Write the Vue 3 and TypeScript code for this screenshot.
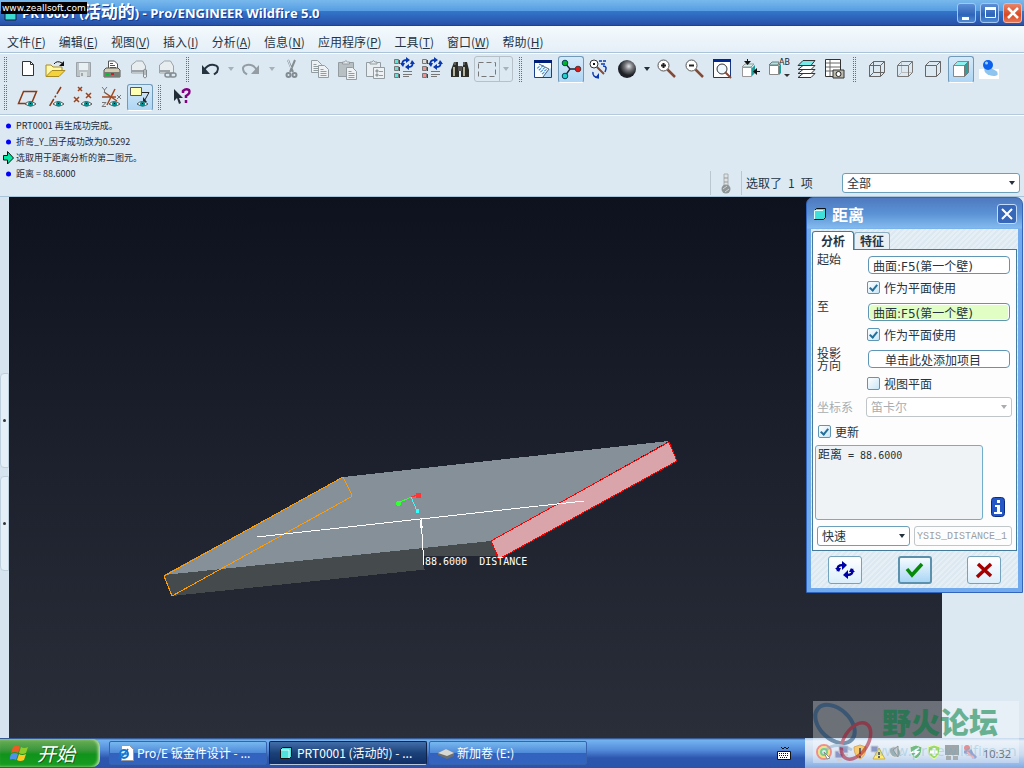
<script setup lang="ts">
import { ref } from 'vue'

interface Tool {
  id: string
  label: string
  kind?: 'icon' | 'grip' | 'arrow' | 'box'
  on?: boolean
}

const menus = [
  ['文件', 'F'], ['编辑', 'E'], ['视图', 'V'], ['插入', 'I'], ['分析', 'A'],
  ['信息', 'N'], ['应用程序', 'P'], ['工具', 'T'], ['窗口', 'W'], ['帮助', 'H'],
]

const eye = '<path d="M9 19q5-5 11 0q-5 4-11 0z" fill="#fff" stroke="#555"/><circle cx="14.500" cy="19" r="2.500" fill="#008c8c"/><path d="M14 18h1v1h-1z" fill="#000"/>'
const smallBoxes = (c: string, first: string) =>
  `<g stroke="#777"><path d="M2.500 2.500h4v4h-4z" fill="${first}"/><path d="M2.500 9.500h4v4h-4zM2.500 16.500h4v4h-4z" fill="${c}"/></g><path d="M7.500 3v4M7.500 10v4M7.500 17v4" stroke="#444"/><path d="M11 14.500h9M11 17.500h9M11 19.500h6" stroke="#777"/><path d="M10.500 8q-1-5 4-5M20.500 5q1 5-4 5" stroke="#0838b0" stroke-width="2" fill="none"/><path d="M14 0l4 3-4 3zM17 7l-4 3 4 3z" fill="#0838b0"/><path d="M8 6h5l-2 4zM18 7h5l-3-4z" fill="#0838b0"/>`
const sheet = (x: number, y: number) =>
  `<path d="M${x} ${y}h6l4 4v8h-10z" fill="#eef2f4" stroke="#939ca1"/><path d="M${x + 2} ${y + 4}h3M${x + 2} ${y + 6}h6M${x + 2} ${y + 8}h6M${x + 2} ${y + 10}h6" stroke="#939ca1"/>`
const lens = '<circle cx="8.500" cy="8.500" r="5.500" fill="#fff" stroke="#555"/><path d="M12.500 12.500l7.500 7.500" stroke="#854a35" stroke-width="2.500"/>'

const art: Record<string, string> = {
  new: '<path d="M6.500 4.500h8l3 3v11h-11z" fill="#fff" stroke="#333"/><path d="M14.500 4.500v3h3" fill="none" stroke="#333"/>',
  open: '<path d="M2 19v-11h5l2 2h9v3" fill="#fff8a8" stroke="#a88b20"/><path d="M2 19.500l6-6h13l-6 6z" fill="#f4d23a" stroke="#a88b20"/><path d="M10 7q3-4 8-1" fill="none" stroke="#111"/><path d="M20 4v5h-5z" fill="#111"/>',
  save: '<path d="M4.500 5.500h14v14h-14z" fill="#bcc3c7" stroke="#9ba3a8"/><path d="M7 6h9v7h-9z" fill="#e9f0f4"/><path d="M8 15h7v5h-7z" fill="#dbe2e6"/><path d="M9 16h2v3h-2z" fill="#a0a8ac"/>',
  print: '<path d="M8.500 12v-8h6l3 3v6" fill="#fff" stroke="#555"/><path d="M10 6.500h3M10 8.500h5M10 10.500h6" stroke="#555"/><path d="M4 13l2-2h12l2 2v7H4z" fill="#d4cfb4" stroke="#555"/><path d="M4 15h16v5H4z" fill="#777d74"/><path d="M6 16h3v2H6z" fill="#00c030"/><path d="M11 16h3v2h-3z" fill="#d71920"/>',
  mail: '<path d="M3.500 8l5-4h6l3 5v7h-14z" fill="#e8edef" stroke="#9ba3a8"/><path d="M4 14h12" stroke="#9ba3a8" stroke-width="2"/><path d="M15.500 20v-7q1.500-2 3 0v7q-1.500 2-3 0zM17 13v5" fill="#e8edef" stroke="#838c91"/>',
  link: '<path d="M3.500 8l5-4h6l3 5v7h-14z" fill="#e8edef" stroke="#9ba3a8"/><path d="M4 14h10" stroke="#9ba3a8" stroke-width="2"/><g fill="none" stroke="#838c91" stroke-width="1.500"><rect x="9" y="16" width="6" height="4" rx="2"/><rect x="14" y="16" width="6" height="4" rx="2"/></g>',
  undo: '<path d="M6 13q4-6 10-5q6 1 3 7l-3 2.500" fill="none" stroke="#263442" stroke-width="2"/><path d="M4 8v9h8z" fill="#263442"/>',
  redo: '<path d="M18 13q-4-6-10-5q-6 1-3 7l3 2.500" fill="none" stroke="#939da3" stroke-width="2"/><path d="M20 8v9h-8z" fill="#939da3"/>',
  cut: '<path d="M8 3l5 12M15 3l-5 12" stroke="#838c91" stroke-width="2"/><path d="M8 3l3 8" stroke="#dce9f3"/><g fill="none" stroke="#838c91" stroke-width="2"><circle cx="8.500" cy="18" r="2"/><circle cx="14.500" cy="18" r="2"/></g>',
  copy: sheet(3.5, 3.5) + sheet(10.5, 8.5),
  paste: '<path d="M2.500 5.500h15v14h-15z" fill="#b9c0c4" stroke="#939ca1"/><path d="M6.500 7v-2h2q1-3 3 0h2v2z" fill="#e4eaed" stroke="#939ca1"/>' + sheet(10.5, 10.5),
  special: '<path d="M2.500 5.500h14v14h-14z" fill="#e8eef1" stroke="#939ca1"/><path d="M6 7v-2h2q1-3 3 0h2v2z" fill="#e4eaed" stroke="#939ca1"/><path d="M9.500 10.500h11v11h-11z" fill="#eef2f4" stroke="#939ca1"/><path d="M12 13h2v2h-2zM12 17h2v2h-2zM15 14.500h4M15 18.500h4" fill="#939ca1" stroke="#939ca1"/>',
  regen: smallBoxes('#5fe3db', '#5fe3db'),
  regen2: smallBoxes('#f58f8f', '#ddd'),
  find: '<path d="M6 5h4v4l1 2v9H3v-7zM15 5h4l2 8v7h-8v-9l2-2z" fill="#2d2d28"/><path d="M10 9h4v5h-4z" fill="#555"/><path d="M6 10v9M16 10v9" stroke="#b8b6a0" stroke-width="2"/><path d="M7 5v3M16 5v3" stroke="#888"/>',
  repaint: '<path d="M3.500 3.500h17v17h-17z" fill="#f9fdff" stroke="#1a3d8c"/><path d="M3 3h18v3H3z" fill="#001e78"/><path d="M12 20q2-6 8-9v9z" fill="#b8dcf8"/><path d="M7 10l6 7M11 9l4 5" stroke="#2f86d8" stroke-dasharray="1 1.500" stroke-width="3"/><path d="M8 7q6 3 10 5l-6 8" stroke="#526477" fill="none"/>',
  spin: '<path d="M6 6l5 6h9M11 12l-5 7" stroke="#223" stroke-width="1.300" fill="none"/><circle cx="6" cy="6" r="2.800" fill="#00b52b" stroke="#045"/><circle cx="19" cy="12" r="2.800" fill="#e21818" stroke="#533"/><circle cx="6" cy="19" r="2.800" fill="#21cfcf" stroke="#045"/>',
  orient: '<circle cx="7" cy="7" r="4" fill="#fff" stroke="#333"/><path d="M7 6v2" stroke="#111" stroke-width="2"/><path d="M10 10l7 7" stroke="#854a35" stroke-width="2"/><g fill="none" stroke="#0838b0" stroke-width="1.500"><path d="M12 4h3M16 4h3M14 7h4M16 9q5 0 2 6M12 21q-7-1-6-6"/></g><path d="M8 21l4-5v5z" fill="#0838b0"/>',
  shade: '<defs><radialGradient id="ball" cx=".6" cy=".35"><stop offset="0" stop-color="#dfe3e6"/><stop offset=".45" stop-color="#77797e"/><stop offset="1" stop-color="#1d2025"/></radialGradient></defs><circle cx="12" cy="12" r="9" fill="url(#ball)"/>',
  zin: lens + '<path d="M6 8.500h5M8.500 6v5" stroke="#222" stroke-width="2"/>',
  zout: lens + '<path d="M6 8.500h5" stroke="#222" stroke-width="2"/>',
  refit: '<path d="M2.500 3.500h17v17h-17z" fill="#fff" stroke="#173884"/><path d="M2 2h18v3H2z" fill="#002a92"/><circle cx="11" cy="12" r="5" fill="#eef8ff" stroke="#333"/><path d="M14 15l6 6" stroke="#854a35" stroke-width="2"/>',
  reorient: '<path d="M3.500 10.500h9v9h-9z" fill="#fff" stroke="#999"/><path d="M3 10l3-3h9l-3 3z" fill="#c9f6f4" stroke="#999"/><path d="M13 11l3-3v8l-3 3z" fill="#1e9d98"/><path d="M8.500 2v4M21 14.500h-5" stroke="#111"/><path d="M5 4h7l-3.500 4zM18 11v7l-4-3.500z" fill="#111"/>',
  saved: '<path d="M2.500 8.500h9v9h-9z" fill="#fff" stroke="#888"/><path d="M2 8l3-3h7l-1 3z" fill="#9feae8" stroke="#777"/><path d="M12 9l2-2v9l-2 2z" fill="#1e9d98"/><text x="12" y="8" font-size="8" font-family="DejaVu Sans" fill="#222">AB</text><path d="M17 17h6l-3 3z" fill="#333"/>',
  layers: '<g stroke="#333" fill="#fff"><path d="M3 20.500l5-4h12l-4 4z"/><path d="M3 16.500l5-4h12l-4 4z"/><path d="M3 12.500l5-4h12l-4 4z"/><path d="M3 8.500l5-5h12l-4 5z" fill="#79e9e8"/></g>',
  viewmgr: '<path d="M2.500 2.500h15v17h-15z" fill="#fff" stroke="#333"/><path d="M3 6h14M3 10h14M3 14h14M7 3v16" stroke="#666"/><path d="M10 13h11v8H10z" fill="#bcb9ad" stroke="#333"/><circle cx="15.500" cy="17" r="2.500" fill="#fff" stroke="#222"/>',
  wire: '<path d="M4.500 8.500h11v11h-11zM8.500 4.500h11v11h-11zM4.500 8.500l4-4M15.500 8.500l4-4M15.500 19.500l4-4M4.500 19.500l4-4" fill="none" stroke="#666"/>',
  hidden: '<path d="M8.500 4.500v11h11M4.500 19.500l4-4" fill="none" stroke="#bbb"/><path d="M4.500 8.500h11v11h-11zl4-4h11v11l-4 4M15.500 8.500l4-4" fill="none" stroke="#777"/>',
  nohidden: '<path d="M4.500 8.500h11v11h-11zl4-4h11v11l-4 4M15.500 8.500l4-4" fill="none" stroke="#666"/>',
  shaded: '<path d="M4.500 8.500h11v11h-11z" fill="#fff" stroke="#888"/><path d="M4.500 8.500l4-4h11l-4 4z" fill="#8cf0ef" stroke="#888"/><path d="M15.500 8.500l4-4v11l-4 4z" fill="#329d9b" stroke="#777"/>',
  realism: '<path d="M2 12h20v10H2z" fill="#fff"/><ellipse cx="14" cy="15" rx="7" ry="3.500" fill="#8ec4ee" transform="rotate(20 14 15)"/><circle cx="11" cy="8" r="5" fill="#0b61ed"/><circle cx="9.500" cy="6" r="1.500" fill="#9dd0ff"/>',
  plane: '<path d="M2.500 18.500l5-12h13l-5 12z" fill="none" stroke="#8c3a12" stroke-width="1.500"/>' + eye,
  axis: '<path d="M17 2L5 22" stroke="#8c3a12" stroke-width="1.500" stroke-dasharray="8 2 2 2"/>' + eye,
  points: '<path d="M6 2l4 4M10 2L6 6M14 8l5 5M19 8l-5 5M2 12l5 5M7 12l-5 5" stroke="#9b431c" stroke-width="1.500"/>' + eye,
  csys: '<path d="M4 7l13 9M15 4L7 20M2 12h14" stroke="#a04a22" stroke-width="1.500"/><path d="M2 2l2.500 3L7 2M4.500 5v3M17 10l4 4M21 10l-4 4M2 17.500h4l-4 4h4" stroke="#777" fill="none"/>' + eye,
  note: '<path d="M2.500 2.500h11v8h-11z" fill="#ffffb4" stroke="#555"/><path d="M14 7.500h7l-5 9" stroke="#222" fill="none"/><path d="M15 12v5h4z" fill="#222"/>' + eye,
  help: '<path d="M4 4v12l3-3 2 6 2-1-2-5h4z" fill="#222d38"/><path d="M13 8V6q3-3 6-1q2 3-3 6v2M16 15v3" stroke="#800080" stroke-width="2.500" fill="none"/>',
  box: '<path d="M3.500 5.500h17v14h-17z" fill="none" stroke="#777" stroke-dasharray="5 3"/>',
}

const mk = (id: string, label: string, on = false): Tool => ({ id, label, on, kind: 'icon' })
const grip = (id: string): Tool => ({ id, label: '', kind: 'grip' })
const arrow = (id: string, label: string): Tool => ({ id, label, kind: 'arrow' })

const rowOne: Tool[] = [
  grip('g1'), mk('new', '新建'), mk('open', '打开'), mk('save', '保存'), mk('print', '打印'), mk('mail', '发送邮件'), mk('link', '发送链接'),
  grip('g2'), mk('undo', '撤消'), arrow('dim-1', '撤消列表'), mk('redo', '重做'), arrow('dim-2', '重做列表'),
  mk('cut', '剪切'), mk('copy', '复制'), mk('paste', '粘贴'), mk('special', '选择性粘贴'), mk('regen', '再生'), mk('regen2', '再生管理器'), mk('find', '查找'),
  { id: 'box', label: '选取框', kind: 'box' },
  grip('g3'), mk('repaint', '重画'), mk('spin', '旋转中心', true), mk('orient', '定向模式'), mk('shade', '外观库'), arrow('dark-1', '外观列表'),
  mk('zin', '放大'), mk('zout', '缩小'), mk('refit', '重新调整'), mk('reorient', '重定向'), mk('saved', '已命名视图'), mk('layers', '层'), mk('viewmgr', '视图管理器'),
  grip('g4'), mk('wire', '线框'), mk('hidden', '隐藏线'), mk('nohidden', '消隐'), mk('shaded', '着色', true), mk('realism', '增强的真实感'),
]
const rowTwo: Tool[] = [
  grip('g5'), mk('plane', '平面显示'), mk('axis', '轴显示'), mk('points', '点显示'), mk('csys', '坐标系显示'), mk('note', '注释显示', true),
  grip('g6'), mk('help', '上下文帮助'),
]
const rows = [rowOne, rowTwo]

const messages = [
  { text: 'PRT0001 再生成功完成。', prompt: false },
  { text: '折弯_Y_因子成功改为0.5292', prompt: false },
  { text: '选取用于距离分析的第二图元。', prompt: true },
  { text: '距离 = 88.6000', prompt: false },
]

const from = ref('曲面:F5(第一个壁)')
const to = ref('曲面:F5(第一个壁)')
const direction = ref('单击此处添加项目')
const fromPlane = ref(true)
const toPlane = ref(true)
const viewPlane = ref(false)
const update = ref(true)
const featureName = ref('YSIS_DISTANCE_1')
</script>

<template>
  <div class="desktop">
    <header class="titlebar">
      <svg class="app-icon" width="16" height="16" viewBox="0 0 16 16"><path d="M2 4h11v11H2z" fill="#3fd9d0" stroke="#123" /></svg>
      <h1>PRT0001 (<span>活动的</span>) - Pro/ENGINEER Wildfire 5.0</h1>
      <div class="caption">
        <button aria-label="最小化"><svg width="18" height="18" viewBox="0 0 18 18"><path d="M4 13h7v3H4z" fill="#fff" /></svg></button>
        <button aria-label="最大化"><svg width="18" height="18" viewBox="0 0 18 18"><path d="M4.500 5.500h10v8h-10z" fill="none" stroke="#fff" /><path d="M4 4.500h11" stroke="#fff" stroke-width="3" /></svg></button>
        <button class="close" aria-label="关闭"><svg width="18" height="18" viewBox="0 0 18 18"><path d="M4 4l10 10M14 4L4 14" stroke="#fff" stroke-width="2.500" /></svg></button>
      </div>
      <span class="stamp">www.zeallsoft.com</span>
    </header>

    <nav class="menubar">
      <button v-for="m in menus" :key="m[1]">{{ m[0] }}(<u>{{ m[1] }}</u>)</button>
    </nav>

    <div class="toolbars">
      <div v-for="(row, i) in rows" :key="i" class="toolrow">
        <template v-for="t in row" :key="t.id">
          <span v-if="t.kind === 'grip'" class="grip"></span>
          <button v-else-if="t.kind === 'arrow'" class="drop" :class="{ dim: t.id.startsWith('dim') }" :aria-label="t.label"><i></i></button>
          <button v-else-if="t.kind === 'box'" class="boxtool" :aria-label="t.label">
            <svg width="24" height="24" viewBox="0 0 24 24" v-html="art.box"></svg><b><i></i></b>
          </button>
          <button v-else class="tool" :class="{ on: t.on }" :aria-label="t.label">
            <svg width="24" height="24" viewBox="0 0 24 24" v-html="art[t.id]"></svg>
          </button>
        </template>
      </div>
    </div>

    <section class="messages">
      <ul>
        <li v-for="m in messages" :key="m.text">
          <svg v-if="m.prompt" width="16" height="14" viewBox="0 0 16 14"><path d="M3.500 4.500h4v-4l6 6.500-6 6v-4h-4z" fill="#00e6a0" stroke="#111" /></svg>
          <svg v-else width="16" height="14" viewBox="0 0 16 14"><circle cx="8.500" cy="7" r="2.500" fill="#00f" /></svg>
          {{ m.text }}
        </li>
      </ul>
      <div class="status">
        <svg class="thermo" width="30" height="24" viewBox="0 0 30 24"><path d="M13 3h4v12h-4z" fill="#dfe3e4" stroke="#a8aeb0" /><path d="M13 7h4M13 11h4" stroke="#999" /><circle cx="15" cy="18" r="4.500" fill="#8e9597" /><path d="M12 18l4-3M14 21l4-3" stroke="#cfd4d5" /></svg>
        <span class="picked">选取了&ensp;1&ensp;项</span>
        <span class="pick filter">
          <select aria-label="过滤器"><option>全部</option></select><i></i>
        </span>
      </div>
    </section>

    <main class="work">
      <div class="gutter"><span></span><span></span></div>
      <div class="canvas">
        <svg class="model" width="933" height="541" viewBox="9 197 933 541" shape-rendering="crispEdges">
          <path d="M164 575L343 477L669 441L491 541Z" fill="#869098" />
          <path d="M164 575L491 541L499 556H424V569H430L172 596Z" fill="#454b4d" />
          <path d="M491 541L669 442L677 461L499 559Z" fill="#d9a4aa" stroke="#f00" />
          <path d="M164 576L343 477L351 493V497L172 596Z" fill="none" stroke="#ff9a00" />
          <path d="M257 537L584 501M421 518L424 565" stroke="#fff" fill="none" />
          <path d="M420 518L423 528H420Z" fill="#fff" />
          <path d="M411 497L418 495" stroke="#f33" />
          <path d="M411 497L398 503" stroke="#3f3" />
          <path d="M411 497L417 511" stroke="#3ff" />
          <circle cx="418.500" cy="495.500" r="3" fill="#ff3434" />
          <circle cx="398.500" cy="503.500" r="2.500" fill="#34ff34" />
          <circle cx="417.500" cy="511" r="2" fill="#3ff" />
          <text x="425" y="565">88.6000&nbsp;&nbsp;DISTANCE</text>
        </svg>
      </div>
      <div class="side"></div>

      <section class="dialog" aria-label="距离">
        <header>
          <svg width="14" height="14" viewBox="0 0 14 14"><path d="M1.500 3.500l2-2h9v9l-2 2h-9z" fill="#3fe0da" stroke="#111" /><path d="M1.500 12V3.500H10" fill="none" stroke="#dff" /></svg>
          <h2>距离</h2>
          <button aria-label="关闭"><svg width="18" height="18" viewBox="0 0 18 18"><path d="M4 4l10 10M14 4L4 14" stroke="#fff" stroke-width="2" /></svg></button>
        </header>
        <div class="body">
          <div class="tabs"><button class="active">分析</button><button>特征</button></div>
          <div class="panel">
            <div class="field"><label for="from">起始</label><input id="from" v-model="from" type="text" /></div>
            <label class="check indent"><input v-model="fromPlane" type="checkbox" />作为平面使用</label>
            <div class="field"><label for="to">至</label><input id="to" v-model="to" class="active" type="text" /></div>
            <label class="check indent"><input v-model="toPlane" type="checkbox" />作为平面使用</label>
            <div class="field"><label for="dir">投影<br />方向</label><input id="dir" v-model="direction" class="hint" type="text" /></div>
            <label class="check indent last"><input v-model="viewPlane" type="checkbox" />视图平面</label>
            <div class="field off">
              <label for="csys">坐标系</label>
              <span class="pick"><select id="csys" disabled><option>笛卡尔</option></select><i></i></span>
            </div>
            <label class="check"><input v-model="update" type="checkbox" />更新</label>
            <div class="result">
              <output>距离<span> = 88.6000</span></output>
              <button aria-label="信息"><svg width="14" height="20" viewBox="0 0 14 20"><rect x=".5" y=".5" width="13" height="19" rx="3" fill="#2458c6" stroke="#0c2b86" /><path d="M6 3h3v3H6zM4 8h5v7h2v2H3v-2h3v-5H4z" fill="#fff" /></svg></button>
            </div>
            <div class="save">
              <span class="pick"><select aria-label="分析类型"><option>快速</option></select><i></i></span>
              <input v-model="featureName" type="text" disabled aria-label="名称" />
            </div>
          </div>
          <footer>
            <button aria-label="重复"><svg width="22" height="20" viewBox="0 0 22 20"><path d="M4 11q-2-6 5-6M18 9q2 6-5 6" fill="none" stroke="#000098" stroke-width="2.500" /><path d="M8 1l5 4-5 5zM14 10l-5 5 5 4z" fill="#0000a8" /><path d="M1 8h6l-2 4zM21 12h-6l2-4z" fill="#0000a8" /></svg></button>
            <button class="default" aria-label="确定"><svg width="22" height="20" viewBox="0 0 22 20"><path d="M3 9l5 6L18 4" fill="none" stroke="#078a07" stroke-width="3.500" /></svg></button>
            <button aria-label="取消"><svg width="22" height="20" viewBox="0 0 22 20"><path d="M5 4l13 12M18 4L4 17" fill="none" stroke="#a40000" stroke-width="3.500" /></svg></button>
          </footer>
        </div>
      </section>
    </main>

    <footer class="taskbar">
      <button class="start">
        <svg width="20" height="20" viewBox="0 0 20 20"><path d="M3 4q4-3 7 0l-2 6q-3-2-7 0z" fill="#ee5a24" /><path d="M11 4q3 2 7 0l-2 6q-4 2-7 0z" fill="#8ecb2c" /><path d="M1 11q4-2 7 0l-2 6q-3-2-7 0z" fill="#4d93e8" /><path d="M9 11q3 2 7 0l-2 6q-4 2-7 0z" fill="#ffc820" /></svg>
        开始
      </button>
      <div class="tasks">
        <button>
          <svg width="16" height="16" viewBox="0 0 16 16"><path d="M3.500 .5h8l4 4v11h-12z" fill="#fff" stroke="#999" /><circle cx="6" cy="9" r="4" fill="#d4efff" stroke="#1676cf" stroke-width="2" /><path d="M3 9h7M0 13q5-1 10-9" stroke="#1676cf" stroke-width="1.500" fill="none" /></svg>
          Pro/E 钣金件设计 - ...
        </button>
        <button class="current">
          <svg width="16" height="16" viewBox="0 0 16 16"><path d="M2.500 4.500l2-2h9v9l-2 2h-9z" fill="#4fe2dc" stroke="#111" /><path d="M3 5h8v8" stroke="#d5ffff" fill="none" /></svg>
          PRT0001 (活动的) - ...
        </button>
        <button>
          <svg width="16" height="16" viewBox="0 0 16 16"><path d="M0 8l8-4 8 4v3l-7 3-9-4z" fill="#6b6f70" /><path d="M0 8l8-4 8 4-7 3z" fill="#d6d8d4" /></svg>
          新加卷 (E:)
        </button>
      </div>
      <svg class="keyboard" width="14" height="14" viewBox="0 0 14 14"><path d="M4 1l2 2 2-2 2 2 2-2" fill="none" stroke="#111" /><path d="M.5 5.500h13v8H.5z" fill="#fff" stroke="#111" /><path d="M2 7.500h10M2 9.500h10M3 11.500h8" stroke="#111" stroke-dasharray="1 1" /></svg>
      <div class="tray">
        <svg width="16" height="18" viewBox="0 0 16 18"><g fill="none" stroke-width="2"><circle cx="8" cy="8" r="7" stroke="#e85b52" /><circle cx="8" cy="8" r="5" stroke="#f1d33b" /><circle cx="8" cy="8" r="3" stroke="#37b957" /></g><path d="M8 8l6 6-3 1z" fill="#fff" stroke="#555" /></svg>
        <svg width="16" height="18" viewBox="0 0 16 18"><path d="M5 2h9v7H5zM1 7h8v7H1z" fill="#5767ae" stroke="#b7bbca" /><path d="M9 11h5M3 16h5" stroke="#bbb" stroke-width="2" /></svg>
        <svg width="16" height="18" viewBox="0 0 16 18"><path d="M8 1l6 2q0 9-6 12q-6-3-6-12z" fill="#f4b22a" stroke="#c7851a" /><path d="M8 4v6M8 12v2" stroke="#222" stroke-width="2" /></svg>
        <svg width="16" height="18" viewBox="0 0 16 18"><path d="M1 2h7v6H1z" fill="#5767ae" stroke="#b7bbca" /><path d="M9 4l6 11H3z" fill="#ffe52a" stroke="#b48a11" /><path d="M9 8v3M9 12v2" stroke="#222" stroke-width="2" /></svg>
        <svg width="16" height="18" viewBox="0 0 16 18"><ellipse cx="7" cy="8" rx="6" ry="5" fill="#7f8c91" stroke="#d9dddd" transform="rotate(35 7 8)" /><path d="M5 6l5-4v11z" fill="#b9bec0" stroke="#59656a" /><path d="M12 12l3-2" stroke="#8bb6d5" /></svg>
        <svg class="gap" width="16" height="18" viewBox="0 0 16 18"><path d="M8 1l6 2q0 9-6 12q-6-3-6-12z" fill="#329b43" stroke="#d8efda" /><path d="M11 4L5 8h5l-4 4" stroke="#fff" stroke-width="2" fill="none" /></svg>
        <svg width="16" height="18" viewBox="0 0 16 18"><path d="M8 1l6 2q0 9-6 12q-6-3-6-12z" fill="#73c82b" stroke="#e5ff79" /><path d="M8 4v8M4 8h8" stroke="#fff" stroke-width="3" /></svg>
        <svg width="16" height="18" viewBox="0 0 16 18"><path d="M1 1h14v10H1z" fill="#737b80" /><path d="M2 12h5v4H2zM9 12h5v4H9z" fill="#7f878b" /></svg>
        <svg width="16" height="18" viewBox="0 0 16 18"><circle cx="5" cy="4" r="3" fill="#d85a62" /><path d="M2 8h6l6 6M8 6l4 8" stroke="#687cbd" stroke-width="3" /><path d="M5 8l7 6" stroke="#ef8f95" stroke-width="2" /></svg>
        <time>10:32</time>
      </div>
    </footer>

    <div class="watermark">
      <svg width="60" height="62" viewBox="0 0 60 62" fill="none"><ellipse cx="22" cy="23" rx="23" ry="15" stroke="#2c577f" stroke-width="4" transform="rotate(43 22 23)" /><ellipse cx="43" cy="40" rx="20" ry="12" stroke="#b02a40" stroke-width="3.500" transform="rotate(-58 43 40)" /><path d="M13 49q10-9 26 0" stroke="#9bb7d0" stroke-width="3" /></svg>
      <strong>野火论坛</strong>
      <em>www.proewildfire.cn</em>
    </div>
  </div>
</template>

<style>
html,
body {
  margin: 0;
}
</style>

<style scoped>
.desktop {
  position: relative;
  display: flex;
  flex-direction: column;
  height: 100vh;
  overflow: hidden;
  background: #dce9f3;
  color: #263442;
  font: 12px/16px "Noto Sans CJK SC", sans-serif;
}
button, input, select { margin: 0; padding: 0; border: 0; color: inherit; font: inherit; background: none; box-sizing: border-box; }
button { display: flex; align-items: center; justify-content: center; flex: none; }
svg { flex: none; display: block; }
h1, h2, ul { margin: 0; padding: 0; }

.titlebar {
  display: flex;
  align-items: center;
  flex: none;
  height: 26px;
  padding: 0 2px 0 3px;
  box-sizing: border-box;
  background: linear-gradient(#78b9ec, #569de2 42%, #3276cb 43%, #2852aa 94%, #183c8b);
}
.titlebar h1 { flex: 1; padding-left: 3px; color: #fff; font: bold 13px/24px "Open Sans", "Noto Sans CJK SC", sans-serif; text-shadow: 1px 1px #173b91; white-space: nowrap; }
.titlebar h1 span { font-size: 17px; line-height: 20px; }
.caption { display: flex; gap: 4px; }
.caption button { width: 19px; height: 20px; border: 1px solid #a3c7f1; border-radius: 3px; background: linear-gradient(#5d8fd6, #2f65b9 60%, #4c8ad4); }
.caption .close { border-color: #f2b5a5; background: linear-gradient(#e98568, #d64a24 60%, #ea7451); }
.stamp { position: absolute; top: 2px; left: 1px; padding: 0 1px; background: #000; color: #fff; font: 9px/12px "DejaVu Sans", sans-serif; white-space: nowrap; }

.menubar { display: flex; flex: none; gap: 13px; height: 26px; padding-left: 7px; background: linear-gradient(#f4fafd, #e5eff7); border-bottom: 1px solid #a9c3d8; }
.menubar button { padding-top: 5px; white-space: nowrap; }

.toolbars { flex: none; padding: 1px 0 3px; border-top: 1px solid #fff; border-bottom: 1px solid #b3cadc; box-shadow: 0 1px #fff; }
.toolrow { display: flex; height: 28px; align-items: center; }
.grip { flex: none; width: 4px; height: 27px; margin: 0 6px 0 4px; background: repeating-linear-gradient(0deg, #dce9f3 0 1px, transparent 1px 2px), repeating-linear-gradient(90deg, #4f7595 0 1px, transparent 1px 2px); }
.tool { width: 28px; height: 28px; }
.tool.on { width: 26px; height: 27px; margin: 0 1px; border: 1px solid #7199b8; border-bottom-color: #fff; border-radius: 3px; background: linear-gradient(#d5eafa, #aed6f5); }
.drop { width: 12px; height: 28px; }
.drop i, .boxtool i, .pick i { border: 3px solid transparent; border-top: 4px solid #24313d; border-bottom: 0; }
.dim i, .boxtool i { border-top-color: #a8b1b7; }
.drop.dim { width: 13px; }
.boxtool { width: 39px; height: 26px; margin-right: 2px; border: 1px solid #b5c0c7; border-radius: 3px; }
.boxtool b { display: flex; align-items: center; justify-content: center; width: 12px; height: 24px; border-left: 1px solid #b5c0c7; }

.messages { display: flex; flex: none; align-items: flex-end; justify-content: space-between; height: 80px; border-bottom: 1px solid #a9c3d8; margin-top: 1px; }
.messages ul { align-self: flex-start; padding-top: 2px; list-style: none; font-size: 9px; }
.messages li { display: flex; align-items: center; height: 16px; color: #1c2833; white-space: nowrap; }
.status { display: flex; align-items: center; padding-right: 4px; height: 26px; }
.thermo { border: solid #b8c7d1; border-width: 0 1px; }
.picked { padding-left: 4px; width: 96px; white-space: nowrap; }
.pick { position: relative; display: block; }
.pick i { position: absolute; right: 5px; top: 8px; pointer-events: none; }
select { appearance: none; width: 100%; height: 20px; padding: 0 4px; border: 1px solid #6b9fba; border-radius: 3px; background: #fff; line-height: 16px; opacity: 1; }
.filter { width: 178px; }

.work { position: relative; display: flex; flex: 1; min-height: 0; }
.gutter { display: flex; flex: none; flex-direction: column; gap: 8px; width: 9px; padding-top: 176px; box-sizing: border-box; background: #d5e4ef; }
.gutter span { display: flex; align-items: center; justify-content: center; height: 93px; border: 1px solid #bed0de; border-radius: 4px 0 0 4px; background: #e4eff7; }
.gutter span::after { content: ""; width: 3px; height: 3px; border-radius: 50%; background: #333; }
.canvas { flex: 1; min-width: 0; overflow: hidden; background: linear-gradient(#0e121f, #1c212d 50%, #292e39); }
.model text { fill: #fff; font: 10px "DejaVu Sans Mono", monospace; }
.side { flex: none; width: 82px; background: #dce9f3; }

.dialog { position: absolute; top: 0; right: 1px; width: 217px; padding: 0 4px 4px; box-sizing: border-box; border: 1px solid #3266bd; border-radius: 7px 7px 0 0; background: linear-gradient(#4f79bf, #5b93d6 16px, #83baed 30px, #72aaee 31px); }
.dialog header { display: flex; align-items: center; height: 31px; padding: 0 1px 0 2px; }
.dialog h2 { flex: 1; padding-left: 5px; color: #fff; font: bold 16px/28px "Noto Sans CJK SC", sans-serif; }
.dialog header button { width: 20px; height: 20px; border: 1px solid #c1dcff; border-radius: 3px; background: #3767b9; }
.body { padding: 2px 1px 4px; background: repeating-linear-gradient(135deg, #dce9f1 0 2px, #e5eff5 2px 4px); }
.tabs { display: flex; align-items: flex-end; height: 18px; line-height: 14px; }
.tabs button { width: 36px; height: 17px; border: 1px solid #8baec2; border-bottom: 0; border-radius: 3px 3px 0 0; background: #e8f0f5; font-weight: bold; }
.tabs .active { width: 42px; height: 19px; margin-bottom: -1px; border-color: #447b9b; background: #fff; position: relative; z-index: 1; }
.panel { display: flow-root; padding: 0 4px 4px; border: 1px solid #447b9b; background: #fdfdfe; }
.field { display: flex; height: 30px; }
.field label { width: 51px; flex: none; line-height: 12px; padding-top: 3px; }
.field input { flex: 1; min-width: 0; height: 18px; margin: 6px 2px 0 0; padding: 0 4px; border: 1px solid #6096b5; border-radius: 4px; background: #fff; font-family: "DejaVu Sans", "Noto Sans CJK SC", sans-serif; }
.field input.active { background: #e1ffc4; box-shadow: inset 0 0 0 1px #fff; }
.field input.hint { padding-left: 16px; }
.field .pick { flex: 1; margin-top: 4px; }
.field.off { height: 31px; }
.off label { width: 49px; padding-top: 8px; }
.off, .off select { color: #a8adb0; border-color: #bfc5c8; }
.off .pick i { border-top-color: #a8adb0; }
.check { display: flex; align-items: center; gap: 4px; height: 15px; width: max-content; margin: 0 0 2px 1px; }
.check.indent { margin-left: 50px; }
.check.last { margin-top: 2px; }
.check input { appearance: none; width: 13px; height: 13px; border: 1px solid #6096b5; border-radius: 2px; background: linear-gradient(135deg, #fff, #c9e6f7); }
.check input:checked::after { content: ""; display: block; width: 3px; height: 6px; margin: 1px 0 0 3px; border: solid #23709b; border-width: 0 2px 2px 0; transform: rotate(40deg); }
.result { display: flex; align-items: flex-end; justify-content: space-between; margin: 6px 7px 6px -2px; }
.result output { width: 168px; height: 75px; padding: 0 2px; box-sizing: border-box; border: 1px solid #72aecb; border-radius: 3px; background: #eff3f5; white-space: pre; }
.result output span { font: 10px/16px "DejaVu Sans Mono", monospace; }
.result button { margin-bottom: 3px; }
.save { display: flex; gap: 4px; }
.save .pick { width: 93px; }
.save input { flex: 1; min-width: 0; height: 20px; padding: 0 2px; border: 1px solid #c1c6c9; border-radius: 3px; color: #9a9fa2; font: 10px "Liberation Mono", monospace; }
.dialog footer { display: flex; justify-content: space-between; padding: 5px 16px 0; }
.dialog footer button { width: 34px; height: 28px; border: 1px solid #74a4bd; border-radius: 3px; background: linear-gradient(#fff, #dbeefa); }
.dialog footer .default { border: 2px solid #5b91ad; background: linear-gradient(#f5fbff, #a9d6f5); }

.taskbar { display: flex; align-items: center; flex: none; height: 30px; background: linear-gradient(#223c72, #73b3f2 2px, #538bd9 12px, #2d57af 20px, #2b54a9); color: #fff; }
.start { gap: 7px; justify-content: flex-start; width: 100px; height: 28px; padding-left: 10px; border-radius: 0 8px 8px 0; background: linear-gradient(#6cae57, #3a973b 40%, #10931a 55%, #189d22); box-shadow: inset -2px 0 3px #b4df9f; font-style: italic; font-size: 19px; line-height: 26px; text-shadow: 1px 1px #175f1c; }
.tasks { display: flex; gap: 2px; flex: 1; padding-left: 9px; }
.tasks button { justify-content: flex-start; gap: 3px; flex: 0 1 158px; height: 24px; padding-left: 8px; border: 1px solid #3762ad; border-radius: 2px; background: linear-gradient(#77b8ef, #4e89d8 50%, #3262bd 51%, #3265c0); white-space: nowrap; overflow: hidden; }
.tasks .current { background: linear-gradient(#426ea9, #1b4179 50%, #102e68); border-color: #10234a #10234a #b7c8de; }
.keyboard { margin-right: 14px; }
.tray { display: flex; align-items: center; gap: 2px; align-self: stretch; width: 219px; padding-left: 11px; box-sizing: border-box; background: linear-gradient(#adc8e8, #e4edf7 3px, #cadbf0 55%, #80abe4); color: #263442; }
.tray time { margin-left: 3px; font: 11px "Noto Sans", sans-serif; }
.tray .gap { margin-left: 2px; }

.watermark { position: absolute; right: 5px; bottom: 5px; display: grid; grid-template-columns: 60px 1fr; grid-template-rows: 40px 22px; width: 206px; height: 62px; background: rgba(255, 255, 255, 0.4); opacity: 0.8; pointer-events: none; }
.watermark svg { grid-row: 1 / 3; opacity: 0.75; }
.watermark strong { padding-left: 9px; color: #168b50; font: 900 29px/40px "Noto Sans CJK SC", sans-serif; opacity: 0.75; white-space: nowrap; }
.watermark em { color: #77b9ce; font: 15px/18px "Open Sans", sans-serif; opacity: 0.45; white-space: nowrap; }
</style>
